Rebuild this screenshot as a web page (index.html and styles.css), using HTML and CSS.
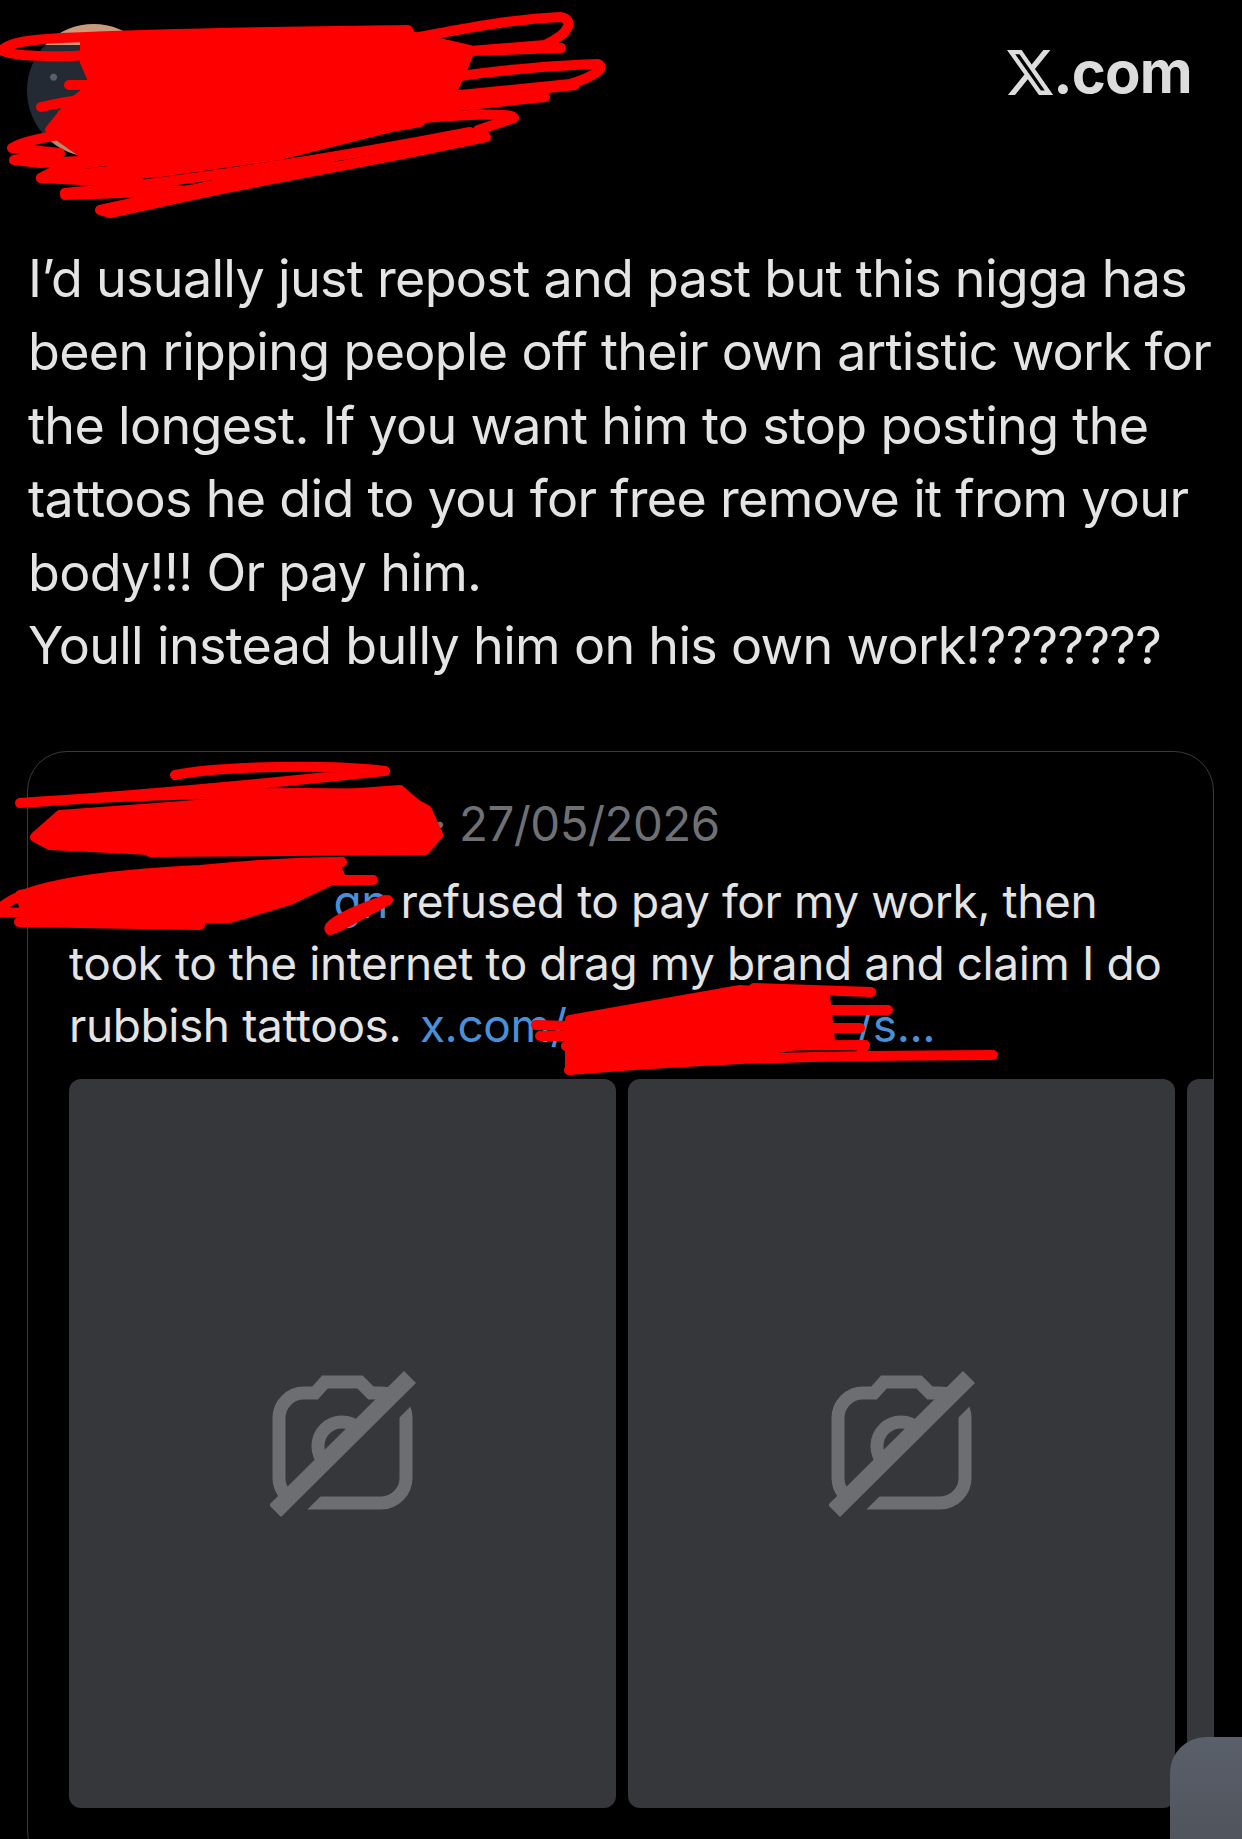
FILE: index.html
```html
<!DOCTYPE html>
<html lang="en">
<head>
    <meta charset="UTF-8">
    <meta name="viewport" content="width=device-width, initial-scale=1.0">
    <title>X.com</title>
    <link rel="stylesheet" href="styles.css">
</head>
<body>
    <div class="page">
        <div class="top">
            <div class="avatar"></div>
            <div class="brand">
                <svg class="xlogo" viewBox="1.25 2.25 21.5 19.5" preserveAspectRatio="none"><path d="M18.244 2.25h3.308l-7.227 8.26 8.502 11.24H16.17l-5.214-6.817L4.99 21.75H1.68l7.73-8.835L1.254 2.25H8.08l4.713 6.231zm-1.161 17.52h1.833L7.084 4.126H5.117z"/></svg>
                <span>.com</span>
            </div>
        </div>
        <p class="post">I’d usually just repost and past but this nigga has<br>been ripping people off their own artistic work for<br>the longest. If you want him to stop posting the<br>tattoos he did to you for free remove it from your<br>body!!! Or pay him.<br>Youll instead bully him on his own work!???????</p>
        <div class="quote">
            <div class="quote-head">
                <span class="quote-name">2h</span>
                <span class="quote-date">· 27/05/2026</span>
            </div>
            <p class="quote-text"><span class="mention">gn</span> refused to pay for my work, then<br>took to the internet to drag my brand and claim I do<br>rubbish tattoos. <span class="link">x.com/<span class="link-gap"></span>/s...</span></p>
            <div class="media">
                <div class="tile">
                    <svg class="noimg" viewBox="20 30 146 146"><path class="cam" d="M54 52H65L75 41H110L121 52H131A25 25 0 0 1 156 77V137A25 25 0 0 1 131 162H54A25 25 0 0 1 29 137V77A25 25 0 0 1 54 52Z"/><path class="cam" d="M75 122A24 24 0 0 1 109 88"/><path class="gap" d="M35 181L175 41"/><path class="slash" d="M25 170L160 36"/></svg>
                </div>
                <div class="tile">
                    <svg class="noimg" viewBox="20 30 146 146"><path class="cam" d="M54 52H65L75 41H110L121 52H131A25 25 0 0 1 156 77V137A25 25 0 0 1 131 162H54A25 25 0 0 1 29 137V77A25 25 0 0 1 54 52Z"/><path class="cam" d="M75 122A24 24 0 0 1 109 88"/><path class="gap" d="M35 181L175 41"/><path class="slash" d="M25 170L160 36"/></svg>
                </div>
                <div class="tile"></div>
            </div>
        </div>
        <div class="fab"></div>
        <!-- red marker over the names -->
        <svg class="scribble" viewBox="0 0 1242 1839">
            <path class="fill" d="M85 42L410 36L470 50L462 70L450 95L400 125L280 155L160 172L90 158L50 130L70 105L95 85L85 62Z"/>
            <path d="M2 50C10 42 30 40 60 38C200 32 320 31 408 30L412 38C450 32 500 20 560 17C574 19 572 32 545 45L420 55M2 50C10 57 60 57 90 55M561 48L440 52"/>
            <path d="M460 76C500 70 560 65 598 64C606 68 595 76 570 84L450 96M575 85L440 100M545 97L400 112"/>
            <path d="M514 118C512 113 480 113 400 120L300 130M514 118L478 130L486 137L408 153L216 190L110 213L100 210L200 188L330 160"/>
            <path d="M12 148C30 135 120 125 300 108M12 148L60 153L14 160L40 163L200 155M41 178C60 165 90 162 200 150M41 178L140 183M65 193L210 190L65 195M41 107C70 100 110 95 200 90M69 85L140 85"/>
            <path d="M41 178C120 172 260 150 420 122M65 193C150 185 300 165 470 132M100 180L300 150"/>
            <path class="fill" d="M60 815L400 790L425 812L438 835L420 848L150 850L50 845L35 837Z"/>
            <path d="M175 775C220 766 330 764 385 771C300 780 150 795 20 803C120 795 300 790 400 795L427 810L438 835L425 850L150 852"/>
            <path class="fill" d="M20 895L100 880L220 870L335 864L340 876L290 900L230 918L30 922Z"/>
            <path d="M4 905C30 885 100 875 200 870C250 865 300 862 342 862L300 870M373 880L200 880M388 900L340 926L330 930C325 925 350 912 385 900M0 912L100 915M19 922L200 925"/>
            <path class="fill" d="M570 1020L740 990L825 995L830 1040L700 1060L570 1068Z"/>
            <path d="M536 1025L600 1027M540 1036L620 1036M566 1046L640 1040M569 1070C640 1065 700 1056 993 1055M754 988L871 992M700 1010L888 1010M740 1028L860 1028M660 1046L865 1045L860 1055"/>
        </svg>
    </div>
</body>
</html>
```

FILE: styles.css
```css
body{
    margin: 0;
    background-color: #000;
}
.page{
    position: relative;
    width: 1242px;
    height: 1839px;
    overflow: hidden;
    font-family: "Inter", "Liberation Sans", sans-serif;
    color: #e4e4e4;
}
.top{
    display: flex;
    justify-content: space-between;
    align-items: flex-start;
    padding: 24px 50px 0 27px;
}
.avatar{
    width: 133px;
    height: 133px;
    border-radius: 50%;
    background:
        radial-gradient(circle at 20% 40%, #56606e 0 3px, transparent 4px),
        radial-gradient(circle at 12% 62%, #5c6672 0 3px, transparent 4px),
        radial-gradient(circle at 26% 68%, #48525e 0 4px, transparent 5px),
        linear-gradient(#c99a7c 0 16%, #242a33 16% 84%, #b58a70 84%);
}
.brand{
    display: flex;
    align-items: flex-end;
    margin-top: 26px;
    font-size: 58px;
    font-weight: 700;
    line-height: 45px;
    letter-spacing: -0.8px;
    color: #dcdcdc;
}
.xlogo{
    width: 46px;
    height: 45px;
    fill: #dcdcdc;
}
.post{
    margin: 85px 0 0 28px;
    font-size: 52px;
    line-height: 73.4px;
    letter-spacing: -0.68px;
    white-space: nowrap;
}
.quote{
    box-sizing: border-box;
    width: 1187px;
    height: 1120px;
    margin: 69px 0 0 27px;
    padding: 40px 0 0 41px;
    border: 1px solid #3a3a3c;
    border-radius: 40px;
    overflow: hidden;
}
.quote-head{
    display: flex;
    align-items: center;
    height: 62px;
    font-size: 47.4px;
    color: #6f7074;
    letter-spacing: -0.5px;
}
.quote-name{
    width: 364px;
    text-align: right;
    padding-right: 8px;
    box-sizing: border-box;
}
.quote-text{
    margin: 16px 0 0;
    font-size: 46px;
    line-height: 62px;
    letter-spacing: -0.4px;
    white-space: nowrap;
}
.mention{
    display: inline-block;
    width: 319px;
    text-align: right;
    color: #4a90d9;
}
.link{
    margin-left: 6px;
    color: #4a90d9;
}
.link-gap{
    display: inline-block;
    width: 290px;
}
.media{
    display: flex;
    gap: 12px;
    margin-top: 23px;
}
.tile{
    flex: none;
    display: flex;
    justify-content: center;
    align-items: center;
    width: 547px;
    height: 729px;
    border-radius: 12px;
    background-color: #36373b;
}
.noimg{
    width: 146px;
    height: 146px;
    overflow: hidden;
}
.noimg path{
    fill: none;
}
.noimg .cam{
    stroke: #6d6e72;
    stroke-width: 13;
}
.noimg .gap{
    stroke: #36373b;
    stroke-width: 14;
}
.noimg .slash{
    stroke: #6d6e72;
    stroke-width: 17;
}
.fab{
    position: absolute;
    left: 1170px;
    top: 1737px;
    width: 120px;
    height: 140px;
    border-radius: 36px;
    background: linear-gradient(#5a606a, #4b5058);
}
.scribble{
    position: absolute;
    left: 0;
    top: 0;
    width: 1242px;
    height: 1839px;
}
.scribble path{
    fill: none;
    stroke: #fe0000;
    stroke-width: 10;
    stroke-linecap: round;
    stroke-linejoin: round;
}
.scribble .fill{
    fill: #fe0000;
}
```
